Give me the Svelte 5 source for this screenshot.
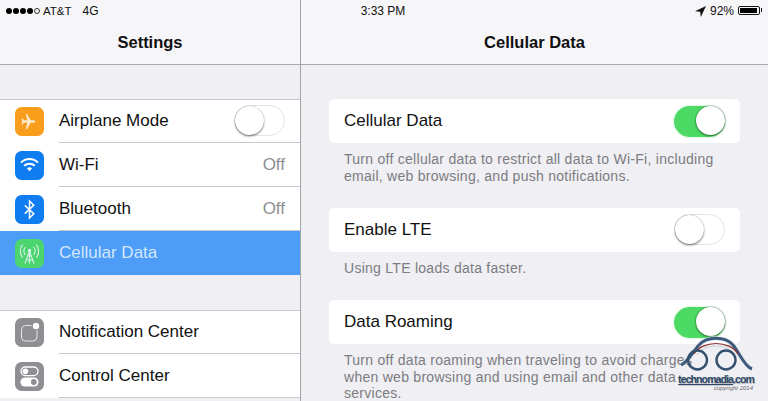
<script>
	const groupOne = [
		{ label: 'Airplane Mode', icon: 'plane', color: '#f99d1c', toggle: true },
		{ label: 'Wi-Fi', icon: 'wifi', color: '#0f7cf0', value: 'Off' },
		{ label: 'Bluetooth', icon: 'bt', color: '#0f7cf0', value: 'Off' },
		{ label: 'Cellular Data', icon: 'cell', color: '#4cd964', active: true }
	];
	const groupTwo = [
		{ label: 'Notification Center', icon: 'notif', color: '#8e8e93' },
		{ label: 'Control Center', icon: 'control', color: '#8e8e93' }
	];
	const settings = [
		{
			label: 'Cellular Data',
			on: true,
			lines: ['Turn off cellular data to restrict all data to Wi-Fi, including', 'email, web browsing, and push notifications.']
		},
		{ label: 'Enable LTE', on: false, lines: ['Using LTE loads data faster.'] },
		{
			label: 'Data Roaming',
			on: true,
			lines: ['Turn off data roaming when traveling to avoid charges', 'when web browsing and using email and other data', 'services.']
		}
	];
</script>

{#snippet icon(name)}
	<svg viewBox="0 0 29 29" width="29" height="29">
		{#if name === 'plane'}
			<path fill="#fde8c8" d="M20.2 14.5c0-.8-.8-1.2-1.7-1.2h-2.8L12.2 7h-1.5l1.7 6.3H9L7.6 11.5H6.4l.8 3-.8 3h1.2L9 15.7h3.4L10.7 22h1.5l3.5-6.3h2.8c.9 0 1.7-.4 1.7-1.2z" />
		{:else if name === 'wifi'}
			<g fill="none" stroke="#fff" stroke-width="2">
				<path d="M6 11.6a12 12 0 0 1 17 0" />
				<path d="M9.2 14.8a7.6 7.6 0 0 1 10.6 0" />
			</g>
			<path fill="#fff" d="M12 17.4a3.8 3.8 0 0 1 5 0l-2.5 2.8z" />
		{:else if name === 'bt'}
			<path fill="none" stroke="#fff" stroke-width="1.5" d="M9.8 10.4l9 8.3-4.3 4.3V6l4.3 4.3-9 8.3" />
		{:else if name === 'cell'}
			<g fill="none" stroke="#e4f8e8" stroke-width="1.1">
				<path d="M10.4 8a6.4 6.4 0 0 0 0 8M18.6 8a6.4 6.4 0 0 1 0 8" />
				<path d="M7.6 5.6a10.4 10.4 0 0 0 0 12.8M21.4 5.6a10.4 10.4 0 0 1 0 12.8" />
				<path d="M14.5 12L10 24.5M14.5 12l4.5 12.5M12.6 17h3.8M11.4 21h6.2" />
				<path d="M14.5 12v12.5" />
			</g>
			<circle cx="14.5" cy="11.5" r="1.7" fill="#e4f8e8" />
		{:else if name === 'notif'}
			<rect x="6.5" y="7.5" width="15.5" height="15.5" rx="4" fill="none" stroke="#e6e6e8" stroke-width="1" />
			<circle cx="21" cy="8" r="4.4" fill="#8e8e93" />
			<circle cx="21" cy="8" r="3.2" fill="#fff" />
		{:else if name === 'control'}
			<rect x="6" y="5" width="17" height="8.6" rx="4.3" fill="none" stroke="#fff" stroke-width="1.3" />
			<circle cx="10.4" cy="9.3" r="2.8" fill="#fff" />
			<rect x="5.4" y="15.4" width="18.2" height="9.2" rx="4.6" fill="#fff" />
			<circle cx="18.8" cy="20" r="2.9" fill="#8e8e93" />
		{/if}
	</svg>
{/snippet}

{#snippet toggle(on)}
	<span class="toggle" class:on><span class="knob"></span></span>
{/snippet}

{#snippet row(item)}
	<li class="row" class:active={item.active}>
		<span class="icon" style="background: {item.color}">{@render icon(item.icon)}</span>
		<span class="row-body">
			<span class="row-label">{item.label}</span>
			{#if item.value}<span class="row-value">{item.value}</span>{/if}
			{#if item.toggle}{@render toggle(false)}{/if}
		</span>
	</li>
{/snippet}

<div class="ipad">
	<aside class="sidebar">
		<header class="bar">
			<h1>Settings</h1>
		</header>
		<ul class="group first">
			{#each groupOne as item}{@render row(item)}{/each}
		</ul>
		<ul class="group second">
			{#each groupTwo as item}{@render row(item)}{/each}
		</ul>
	</aside>

	<main class="detail">
		<header class="bar">
			<h1>Cellular Data</h1>
		</header>
		<div class="sections">
			{#each settings as s}
				<section>
					<div class="card">
						<span>{s.label}</span>
						{@render toggle(s.on)}
					</div>
					<p class="note">
						{#each s.lines as line}<span>{line}</span>{/each}
					</p>
				</section>
			{/each}
		</div>
	</main>

	<!-- status bar runs across both panes, the clock sits at screen centre -->
	<div class="status">
		<span class="status-left">
			<span class="signal">
				<i></i><i></i><i></i><i></i><i class="empty"></i>
			</span>
			<span class="carrier">AT&amp;T</span>
			<span class="network">4G</span>
		</span>
		<span class="time">3:33 PM</span>
		<span class="status-right">
			<svg class="arrow" viewBox="0 0 10 10" width="11" height="11"><path d="M10 0L0 4.8l4.7.5.6 4.7z" /></svg>
			<span>92%</span>
			<span class="battery"><span class="battery-fill"></span></span>
		</span>
	</div>

	<div class="watermark">
		<svg viewBox="0 0 74 38" width="74" height="38">
			<path d="M2 30C10 26 14 16 20 10C28 1 46 1 54 10C60 17 65 31 73 34" fill="none" stroke="#e4e7ec" stroke-width="5" opacity=".6" />
			<path d="M2 30C10 26 14 16 20 10C28 1 46 1 54 10C60 17 65 31 73 34" fill="none" stroke="#3c5a7e" stroke-width="3" />
			<path d="M15 19C23 5 51 5 59 19" fill="none" stroke="#8f2f2a" stroke-width="1.1" />
			<path d="M18 20C26 8 48 8 56 20" fill="none" stroke="#d5dbe2" stroke-width="1.6" />
			<circle cx="18.5" cy="25" r="9.5" fill="none" stroke="#34506f" stroke-width="2.4" />
			<circle cx="47" cy="25" r="9.5" fill="none" stroke="#34506f" stroke-width="2.4" />
		</svg>
		<span class="wm-name"><u>technomadia</u>.com</span>
		<span class="wm-copy">copyright 2014</span>
	</div>
</div>

<style>
	:global(body) {
		margin: 0;
		background: #efeff4;
	}

	.ipad {
		position: relative;
		display: flex;
		width: 768px;
		height: 401px;
		overflow: hidden;
		background: #efeff4;
		font-family: "Liberation Sans", Arial, sans-serif;
		color: #111;
	}

	.sidebar {
		width: 300px;
		flex-shrink: 0;
		border-right: 1px solid #a5a5a8;
	}

	.detail {
		flex: 1;
		min-width: 0;
	}

	.bar {
		height: 64px;
		box-sizing: content-box;
		background: #f6f6f8;
		border-bottom: 1px solid #a9a9ac;
	}

	.bar h1 {
		margin: 0;
		padding-top: 32px;
		font-size: 16.5px;
		line-height: 20px;
		font-weight: 700;
		text-align: center;
	}

	.status {
		position: absolute;
		top: 0;
		left: 0;
		right: 0;
		height: 22px;
		display: grid;
		grid-template-columns: 1fr auto 1fr;
		align-items: center;
		padding: 0 8px 0 6px;
		font-size: 12px;
		color: #111;
	}

	.status-left,
	.status-right {
		display: flex;
		align-items: center;
	}

	.status-right {
		justify-content: flex-end;
		gap: 4px;
	}

	.signal {
		display: flex;
		gap: 1px;
		margin-right: 3px;
	}

	.signal i {
		width: 6px;
		height: 6px;
		border-radius: 50%;
		background: #000;
	}

	.signal i.empty {
		box-sizing: border-box;
		background: none;
		border: 1px solid #333;
	}

	.carrier {
		font-size: 11.5px;
	}

	.network {
		margin-left: 11px;
	}

	.arrow {
		fill: #111;
	}

	.battery {
		position: relative;
		box-sizing: border-box;
		width: 22px;
		height: 9px;
		margin-top: -2px;
		border: 1px solid #111;
		border-radius: 2px;
		padding: 1px;
	}

	.battery::after {
		content: '';
		position: absolute;
		right: -3px;
		top: 1.5px;
		width: 1px;
		height: 4px;
		background: #111;
	}

	.battery-fill {
		display: block;
		width: 92%;
		height: 100%;
		background: #000;
	}

	.group {
		list-style: none;
		margin: 0;
		padding: 0;
		background: #fff;
		box-shadow: inset 0 1px #c8c7cc;
	}

	.first {
		margin-top: 34px;
	}

	.second {
		margin-top: 35px;
	}

	.row {
		height: 44px;
		display: flex;
		align-items: stretch;
		padding-left: 15px;
		gap: 15px;
		font-size: 17px;
	}

	.row.active {
		background: #4d9cf8;
		color: #d4e7fc;
	}

	.icon {
		align-self: center;
		width: 29px;
		height: 29px;
		border-radius: 6.5px;
		flex-shrink: 0;
	}

	.row.active .icon {
		opacity: .92;
	}

	.icon svg {
		display: block;
	}

	.row-body {
		flex: 1;
		display: flex;
		align-items: center;
		justify-content: space-between;
		padding-right: 15px;
		border-bottom: 1px solid #c8c7cc;
		box-sizing: border-box;
	}

	.row.active .row-body {
		border-bottom-color: transparent;
	}

	.row-value {
		color: #8e8e93;
	}

	.toggle {
		display: block;
		position: relative;
		box-sizing: border-box;
		width: 51px;
		height: 31px;
		border-radius: 16px;
		border: 1.5px solid #e4e4e6;
		background: #fff;
	}

	.toggle.on {
		background: #4cd964;
		border-color: #4cd964;
		box-shadow: 0 0 2px rgba(76, 217, 100, .5);
	}

	.knob {
		position: absolute;
		left: -.5px;
		top: -.5px;
		width: 29px;
		height: 29px;
		border-radius: 50%;
		background: #fff;
		box-shadow: 0 1.5px 2px rgba(0, 0, 0, .4), 0 0 1px rgba(0, 0, 0, .5);
	}

	.toggle.on .knob {
		left: auto;
		right: -.5px;
		box-shadow: 0 1px 2px rgba(0, 40, 10, .5), 0 0 1.5px rgba(0, 40, 10, .7);
	}

	.sections {
		padding: 34px 28px 0;
		display: flex;
		flex-direction: column;
		gap: 23.9px;
	}

	.card {
		height: 44px;
		display: flex;
		align-items: center;
		justify-content: space-between;
		padding: 0 15px;
		background: #fff;
		border-radius: 5px;
		font-size: 17px;
	}

	.note {
		margin: 8px 15px 0;
		font-size: 14px;
		letter-spacing: .27px;
		line-height: 16.5px;
		color: #7c7c81;
	}

	.note span {
		display: block;
		white-space: nowrap;
	}

	.watermark {
		position: absolute;
		left: 679px;
		top: 335px;
		width: 74px;
		display: flex;
		flex-direction: column;
		align-items: center;
	}

	.watermark svg {
		display: block;
	}

	.wm-name {
		margin-top: 1px;
		font-size: 10.5px;
		letter-spacing: -.9px;
		line-height: 11px;
		font-weight: 700;
		color: #2d4a6b;
		white-space: nowrap;
		text-shadow: .5px .5px 1px rgba(0, 0, 0, .3);
	}

	.wm-copy {
		align-self: flex-end;
		font-size: 6px;
		line-height: 7px;
		font-style: italic;
		color: #666;
	}
</style>
